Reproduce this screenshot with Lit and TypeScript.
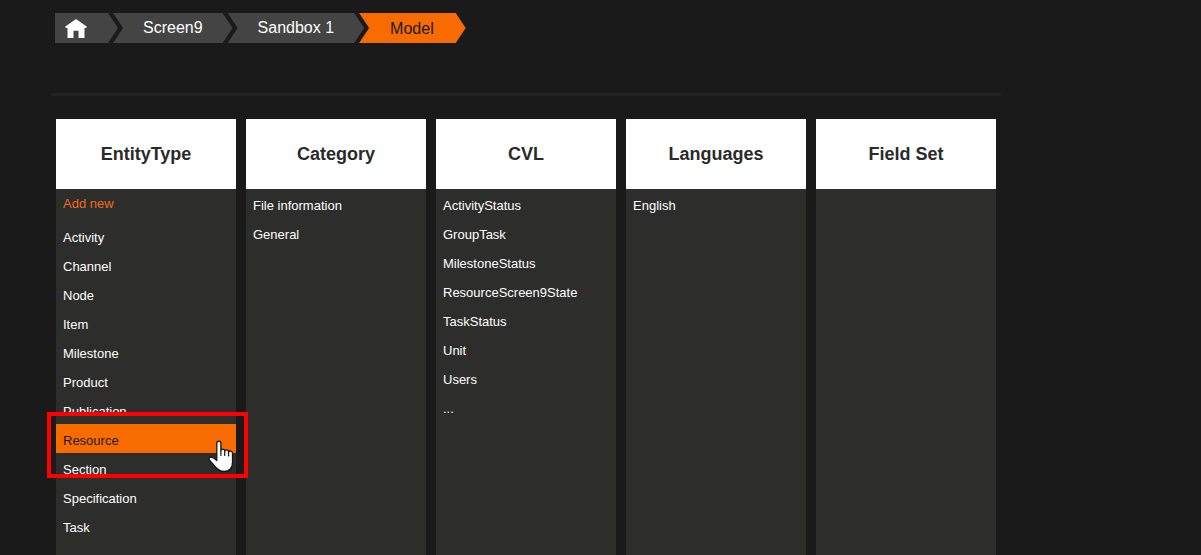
import { LitElement, html, css, svg, nothing } from "lit";
import { customElement, property, state } from "lit/decorators.js";
import { classMap } from "lit/directives/class-map.js";

interface Column {
  title: string;
  addNew?: boolean;
  items: string[];
}

const COLUMNS: Column[] = [
  {
    title: "EntityType",
    addNew: true,
    items: [
      "Activity",
      "Channel",
      "Node",
      "Item",
      "Milestone",
      "Product",
      "Publication",
      "Resource",
      "Section",
      "Specification",
      "Task",
    ],
  },
  { title: "Category", items: ["File information", "General"] },
  {
    title: "CVL",
    items: [
      "ActivityStatus",
      "GroupTask",
      "MilestoneStatus",
      "ResourceScreen9State",
      "TaskStatus",
      "Unit",
      "Users",
      "...",
    ],
  },
  { title: "Languages", items: ["English"] },
  { title: "Field Set", items: [] },
];

const homeIcon = svg`
  <svg class="home-icon" viewBox="0 -1 22 20" width="22" height="20" aria-hidden="true">
    <path fill="#fff" d="M11 0 L22 7.800 L21 9 H19.500 V19 H13.500 V11.700 H8.500 V19 H2.500 V9 H1 L0 7.800 Z"/>
  </svg>`;

const handIcon = svg`
  <svg class="hand" viewBox="0 0 26 33" width="26" height="33" aria-hidden="true">
    <path fill="#fff" stroke="#15151c" stroke-width="1.300" stroke-linejoin="round"
      d="M8.800 20.500 V3.200 C8.800 0.300 12.900 0.300 12.900 3.200 V10.500
         C13.200 8.600 16.500 8.700 16.700 11 C17.200 9.300 20.300 9.500 20.600 11.800
         C21.200 10.500 24.400 10.700 24.500 13.200 V22.500
         C24.500 28 21.500 31.500 16 31.500 C12 31.500 9.500 29.500 7 26.500
         C5 24 3.500 22.300 1.400 19.900 C0.300 18.300 1.800 16.800 3.800 17.300
         C6 17.900 7.500 19.200 8.800 20.500 Z"/>
    <path fill="none" stroke="#15151c" stroke-width="1.200" stroke-linecap="round"
      d="M12.900 10.500 V15.500 M16.700 11 V15.500 M20.600 11.800 V16"/>
  </svg>`;

@customElement("bread-crumbs")
class BreadCrumbs extends LitElement {
  static styles = css`
    :host {
      display: block;
    }
    .trail {
      display: flex;
      padding-left: 4px;
    }
    .crumb {
      display: flex;
      align-items: center;
      box-sizing: border-box;
      height: 30px;
      padding: 0 30px;
      background: #444;
      color: #fff;
      font-size: 16px;
      line-height: 30px;
      text-decoration: none;
      white-space: nowrap;
      clip-path: polygon(0 0, calc(100% - 10px) 0, 100% 50%, calc(100% - 10px) 100%, 0 100%, 10px 50%);
    }
    .crumb + .crumb {
      margin-left: -5px;
    }
    .home {
      padding: 0 31px 0 10px;
      clip-path: polygon(0 0, calc(100% - 10px) 0, 100% 50%, calc(100% - 10px) 100%, 0 100%);
    }
    .current {
      padding: 2px 32px 0 31px;
      background: #f76b00;
      color: #1a1a1a;
    }
  `;

  render() {
    return html`
      <nav class="trail" aria-label="Breadcrumb">
        <a class="crumb home" href="#home" aria-label="Home">${homeIcon}</a>
        <a class="crumb" href="#screen9">Screen9</a>
        <a class="crumb" href="#sandbox">Sandbox 1</a>
        <a class="crumb current" href="#model" aria-current="page">Model</a>
      </nav>
    `;
  }
}

@customElement("model-column")
class ModelColumn extends LitElement {
  static styles = css`
    :host {
      display: block;
      background: #2d2d2b;
      color: #fff;
    }
    .title {
      margin: 0;
      background: #fff;
      color: #2a2a2a;
      font-size: 18px;
      font-weight: bold;
      line-height: 70px;
      text-align: center;
    }
    .add {
      display: block;
      padding: 0 7px 2px;
      color: #f26a1b;
      font-size: 13px;
      line-height: 30px;
      text-decoration: none;
    }
    .list {
      margin: 0;
      padding: 0;
      list-style: none;
    }
    .item {
      position: relative;
    }
    .link {
      display: block;
      padding: 4px 7px 0;
      color: #fff;
      font-size: 13px;
      line-height: 25px;
      text-decoration: none;
    }
    .selected .link {
      background: #f76b00;
      color: #1a1a1a;
    }
    .marker {
      position: absolute;
      z-index: 1;
      inset: -12px -12px -25px -9px;
      border: 4px solid #f00;
      pointer-events: none;
    }
    .hand {
      position: absolute;
      z-index: 2;
      right: 2px;
      top: 16px;
      pointer-events: none;
    }
  `;

  @property({ attribute: false }) column!: Column;
  @property() selected = "";

  render() {
    const { title, addNew, items } = this.column;
    return html`
      <h2 class="title">${title}</h2>
      ${addNew ? html`<a class="add" href="#new">Add new</a>` : nothing}
      <ul class="list">
        ${items.map((name) => {
          const selected = name === this.selected;
          return html`<li class=${classMap({ item: true, selected })}>
            <a class="link" href="#${name}">${name}</a>
            ${selected ? html`<div class="marker"></div>${handIcon}` : nothing}
          </li>`;
        })}
      </ul>
    `;
  }
}

@customElement("app-root")
class AppRoot extends LitElement {
  static styles = css`
    :host {
      display: flex;
      flex-direction: column;
      box-sizing: border-box;
      min-height: 100vh;
      padding: 13px 51px 0;
      background: #1a1a1a;
      font-family: "Liberation Sans", Arial, sans-serif;
    }
    .rule {
      box-sizing: border-box;
      width: 100%;
      max-width: 950px;
      margin: 50px 0 23px;
      border: 0;
      border-top: 3px solid #222;
    }
    .columns {
      display: grid;
      flex: 1;
      grid-template-columns: repeat(5, minmax(0, 1fr));
      gap: 10px;
      box-sizing: border-box;
      width: 100%;
      max-width: 950px;
      padding: 0 5px;
    }
  `;

  @state() private selected = "Resource";

  render() {
    return html`
      <bread-crumbs></bread-crumbs>
      <hr class="rule" />
      <main class="columns">
        ${COLUMNS.map(
          (column) => html`<model-column .column=${column} .selected=${this.selected}></model-column>`
        )}
      </main>
    `;
  }
}
